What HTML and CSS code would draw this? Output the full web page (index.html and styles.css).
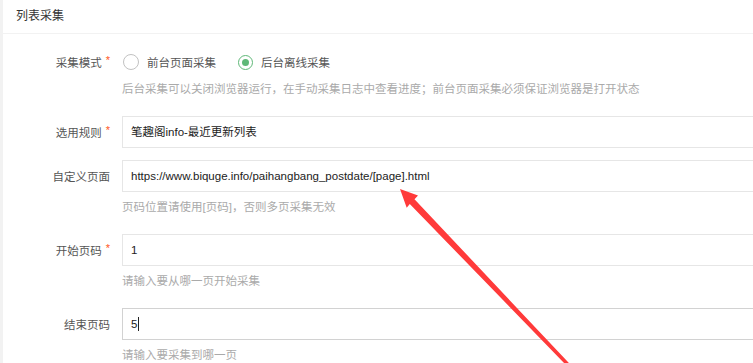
FILE: index.html
```html
<!DOCTYPE html>
<html lang="zh">
<head>
<meta charset="utf-8">
<link rel="stylesheet" href="styles.css">
</head>
<body>
<div class="page">
  <div class="card">
    <div class="card-header">列表采集</div>
    <div class="card-body">
      <div class="form-item">
        <div class="row">
          <label class="label">采集模式<span class="req">*</span></label>
          <div class="radios">
            <span class="radio"><i class="circle"></i>前台页面采集</span>
            <span class="radio checked"><i class="circle"></i>后台离线采集</span>
          </div>
        </div>
        <div class="help help-first">后台采集可以关闭浏览器运行，在手动采集日志中查看进度；前台页面采集必须保证浏览器是打开状态</div>
      </div>
      <div class="form-item tight">
        <div class="row">
          <label class="label">选用规则<span class="req">*</span></label>
          <div class="input">笔趣阁info-最近更新列表</div>
        </div>
      </div>
      <div class="form-item">
        <div class="row">
          <label class="label">自定义页面</label>
          <div class="input">https://www.biquge.info/paihangbang_postdate/[page].html</div>
        </div>
        <div class="help">页码位置请使用[页码]，否则多页采集无效</div>
      </div>
      <div class="form-item">
        <div class="row">
          <label class="label">开始页码<span class="req">*</span></label>
          <div class="input">1</div>
        </div>
        <div class="help">请输入要从哪一页开始采集</div>
      </div>
      <div class="form-item">
        <div class="row">
          <label class="label">结束页码</label>
          <div class="input focus">5<span class="caret"></span></div>
        </div>
        <div class="help">请输入要采集到哪一页</div>
      </div>
    </div>
  </div>
  <svg class="arrow" width="753" height="363" viewBox="0 0 753 363">
    <polygon fill="#ff3a3a" points="400,189 418,195.5 414.5,199.2 600,396 598,398 409.8,204 406.7,207.8"/>
  </svg>
</div>
</body>
</html>
```

FILE: styles.css
```css
html, body {
  margin: 0;
  padding: 0;
  background: #fff;
  overflow: hidden;
}
body {
  font-family: "Liberation Sans", "Noto Sans CJK SC", sans-serif;
  font-size: 11.5px;
  color: #333;
}
.page {
  position: relative;
  width: 753px;
  height: 363px;
  overflow: hidden;
  border-left: 3px solid #f2f2f2;
  box-sizing: border-box;
}
.card {
  width: 820px;
}
.card-header {
  height: 33px;
  line-height: 33px;
  padding-left: 13px;
  border-bottom: 1px solid #f2f2f2;
  color: #333;
  font-size: 12px;
}
.card-body {
  padding-top: 12px;
}
.form-item {
  margin-bottom: 18px;
}
.form-item.tight {
  margin-bottom: 12px;
}
.row {
  display: flex;
  align-items: center;
  height: 32px;
}
.label {
  flex: none;
  width: 119px;
  padding-right: 12px;
  box-sizing: border-box;
  text-align: right;
  color: #555;
}
.req {
  color: #ff5722;
  margin-left: 4px;
  position: relative;
  top: -3px;
  font-size: 11px;
}
.radios {
  display: flex;
  align-items: center;
  height: 32px;
  color: #555;
}
.radio {
  display: flex;
  align-items: center;
  margin-right: 21px;
}
.circle {
  width: 14px;
  height: 14px;
  border: 1px solid #c2c2c2;
  border-radius: 50%;
  margin-left: 1px;
  margin-right: 8px;
  position: relative;
  box-sizing: content-box;
}
.radio.checked .circle {
  border: 1.5px solid #5fb878;
  width: 13px;
  height: 13px;
}
.radio.checked .circle::after {
  content: "";
  position: absolute;
  left: 3px;
  top: 3px;
  width: 7px;
  height: 7px;
  border-radius: 50%;
  background: #5fb878;
}
.input {
  flex: none;
  width: 700px;
  height: 32px;
  box-sizing: border-box;
  border: 1px solid #e6e6e6;
  padding-left: 8px;
  line-height: 30px;
  color: #222;
  display: flex;
  align-items: center;
}
.input.focus {
  border-color: #d2d2d2;
}
.caret {
  display: inline-block;
  width: 1px;
  height: 14px;
  background: #222;
  margin-left: 1px;
}
.help {
  margin-left: 119px;
  margin-top: 6px;
  height: 18px;
  line-height: 18px;
  color: #aaa;
}
.help.help-first {
  margin-top: 2px;
  margin-bottom: 1px;
}
.arrow {
  position: absolute;
  left: -3px;
  top: 0;
}
```
